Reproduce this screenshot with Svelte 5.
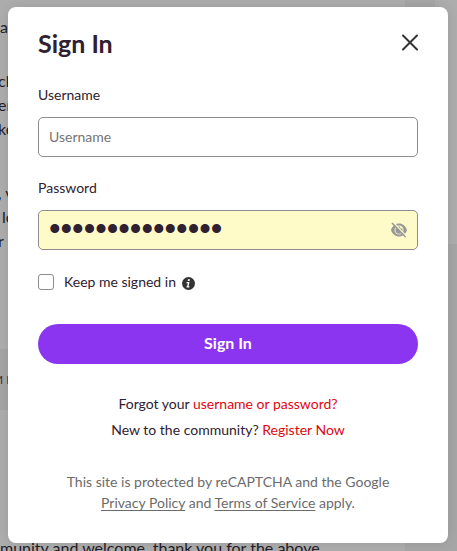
<script>
  let username = $state('');
  let password = $state('communitymember');
  let remember = $state(false);
  let revealed = $state(false);
  let open = $state(true);
</script>

<main class="page">
  <div class="backdrop" aria-hidden="true">
    <div class="tab"></div>
    <div class="rail"></div>
    <p class="first">a</p>
    <p class="second">ck<br />en<br />ke</p>
    <p class="third"><span class="link">,</span> v<br />&nbsp;lo<br />r</p>
    <div class="band">M&nbsp;I</div>
    <p class="last">munity and welcome, thank you for the above</p>
  </div>

  {#if open}
    <div class="dialog" role="dialog" aria-modal="true" aria-labelledby="title">
      <header>
        <h1 id="title">Sign In</h1>
        <button class="close" type="button" aria-label="Close" onclick={() => (open = false)}>
          <svg width="16" height="18" viewBox="0 0 16 18" fill="none" stroke="#333" stroke-width="2" stroke-linecap="round">
            <path d="M1 1.500l14 14M15 1.500L1 15.500" />
          </svg>
        </button>
      </header>

      <form onsubmit={(e) => e.preventDefault()}>
        <label class="caption" for="username">Username</label>
        <input id="username" class="field" type="text" placeholder="Username" bind:value={username} />

        <label class="caption" for="password">Password</label>
        <div class="secret">
          <input id="password" class="field filled" type={revealed ? 'text' : 'password'} bind:value={password} />
          <button class="eye" type="button" aria-label="Show password" onclick={() => (revealed = !revealed)}>
            <svg width="16" height="16" viewBox="0 0 16 16">
              <path fill="#999" fill-rule="evenodd" d="M0 8C1.300 4 4.300 1.500 8 1.500S14.700 4 16 8c-1.300 4-4.300 6.500-8 6.500S1.300 12 0 8zM8 3.500a4.500 4.500 0 1 0 0 9A4.500 4.500 0 0 0 8 3.500z" />
              <path fill="#999" d="M8 4.500a3.600 3.600 0 1 0 3.600 3.600c0-.6-.1-1-.3-1.500A1.700 1.700 0 0 1 9 4.700z" />
              <path d="M2.200 .2l13 14" stroke="#fffbc8" stroke-width="1.500" />
              <path d="M1 1l13.500 14" stroke="#999" stroke-width="1.600" />
            </svg>
          </button>
        </div>

        <div class="remember">
          <input id="remember" type="checkbox" bind:checked={remember} />
          <label for="remember">Keep me signed in</label>
          <svg class="info" width="13" height="13" viewBox="0 0 13 13" role="img" aria-label="More information">
            <circle cx="6.500" cy="6.500" r="6.500" fill="#333" />
            <path fill="#fff" d="M6 2.200h2l-.4 1.800h-2zM4.600 5h2.900l-1 4.300h1l-.2 1.200H4.400l.2-1.200h.5l.7-3.100H4.400z" />
          </svg>
        </div>

        <button class="submit" type="submit">Sign In</button>
      </form>

      <p class="help">
        Forgot your <a href="#recover">username or password?</a><br />
        New to the community? <a href="#register">Register Now</a>
      </p>
      <p class="legal">
        This site is protected by reCAPTCHA and the Google
        <a href="#privacy">Privacy Policy</a> and <a href="#terms">Terms of Service</a> apply.
      </p>
    </div>
  {/if}
</main>

<style>
  :global(body) {
    margin: 0;
    background: #aaa;
  }

  .page {
    position: relative;
    box-sizing: border-box;
    min-height: 100vh;
    padding: 7px 9px 8px 8px;
    overflow: hidden;
    font-family: Lato, 'Liberation Sans', sans-serif;
    font-size: 14px;
    color: #2f2130;
  }

  .backdrop {
    position: absolute;
    inset: 0;
    overflow: hidden;
    background: #adadad;
    color: #241c26;
    font-size: 16px;
    line-height: 24px;
    white-space: nowrap;
  }

  .backdrop p {
    margin: 0;
  }

  .backdrop .first {
    padding-top: 15px;
  }

  .backdrop .second {
    margin-left: -2px;
    padding-top: 30px;
  }

  .backdrop .third {
    margin-left: -2px;
    padding-top: 40px;
  }

  .backdrop .link {
    color: #1c2f6b;
  }

  .band {
    margin: 96px 20px 126px 0;
    text-indent: -8px;
    background: #a5a5a5;
    color: #4b2a25;
    font-size: 12px;
    line-height: 61px;
  }

  .tab {
    position: absolute;
    top: 0;
    right: 22px;
    width: 30px;
    height: 100%;
    background: #a6a6a6;
  }

  .rail {
    position: absolute;
    top: 244px;
    right: 0;
    bottom: 0;
    width: 22px;
    background: #a6a6a6;
  }

  .dialog {
    position: relative;
    box-sizing: border-box;
    padding: 20px 30px 30px;
    border-radius: 8px;
    background: #fff;
    box-shadow: 0 0 12px rgba(0, 0, 0, 0.1);
  }

  header {
    display: flex;
    align-items: center;
    justify-content: space-between;
    height: 32px;
    margin-bottom: 26px;
  }

  h1 {
    margin: 0;
    font-size: 25px;
    line-height: 32px;
    font-weight: 700;
  }

  button {
    border: 0;
    padding: 0;
    background: none;
    font: inherit;
    cursor: pointer;
  }

  .close,
  .eye {
    display: flex;
  }

  form {
    display: flex;
    flex-direction: column;
  }

  .caption {
    margin-bottom: 12px;
    line-height: 20px;
  }

  .field {
    box-sizing: border-box;
    width: 100%;
    height: 40px;
    padding: 0 10px 2px;
    border: 1px solid #8f8b90;
    border-radius: 5px;
    background: #fff;
    color: #2f2130;
    font: inherit;
  }

  #username {
    margin-bottom: 21px;
  }

  .field::placeholder {
    color: #757575;
    opacity: 1;
  }

  .filled {
    display: block;
    padding-right: 36px;
    background: #fffbc8;
  }

  .filled[type='password'] {
    font-family: 'Liberation Sans', sans-serif;
    font-size: 33px;
  }

  .secret {
    position: relative;
  }

  .eye {
    position: absolute;
    top: 12px;
    right: 11px;
  }

  .remember {
    display: flex;
    align-items: center;
    margin: 22px 0 32px;
    line-height: 20px;
  }

  .remember input {
    appearance: none;
    box-sizing: border-box;
    width: 16px;
    height: 16px;
    margin: 0 10px 0 0;
    border: 1px solid #8f8b90;
    border-radius: 3px;
    background: #fff;
  }

  .remember input:checked {
    background: #8b35f0;
  }

  .info {
    margin: 3px 0 0 6px;
  }

  .submit {
    height: 40px;
    padding-bottom: 3px;
    border-radius: 20px;
    background: #8b35f0;
    color: #fff;
    font-size: 16px;
    font-weight: 700;
  }

  .help,
  .legal {
    margin: 27px 0 0;
    text-align: center;
    line-height: 26px;
  }

  .help a {
    color: #e0060f;
    text-decoration: none;
  }

  .legal {
    margin-top: 28px;
    padding: 0 20px;
    color: #6b6b6b;
    line-height: 21px;
  }

  .legal a {
    color: inherit;
    text-underline-offset: 2px;
  }
</style>
